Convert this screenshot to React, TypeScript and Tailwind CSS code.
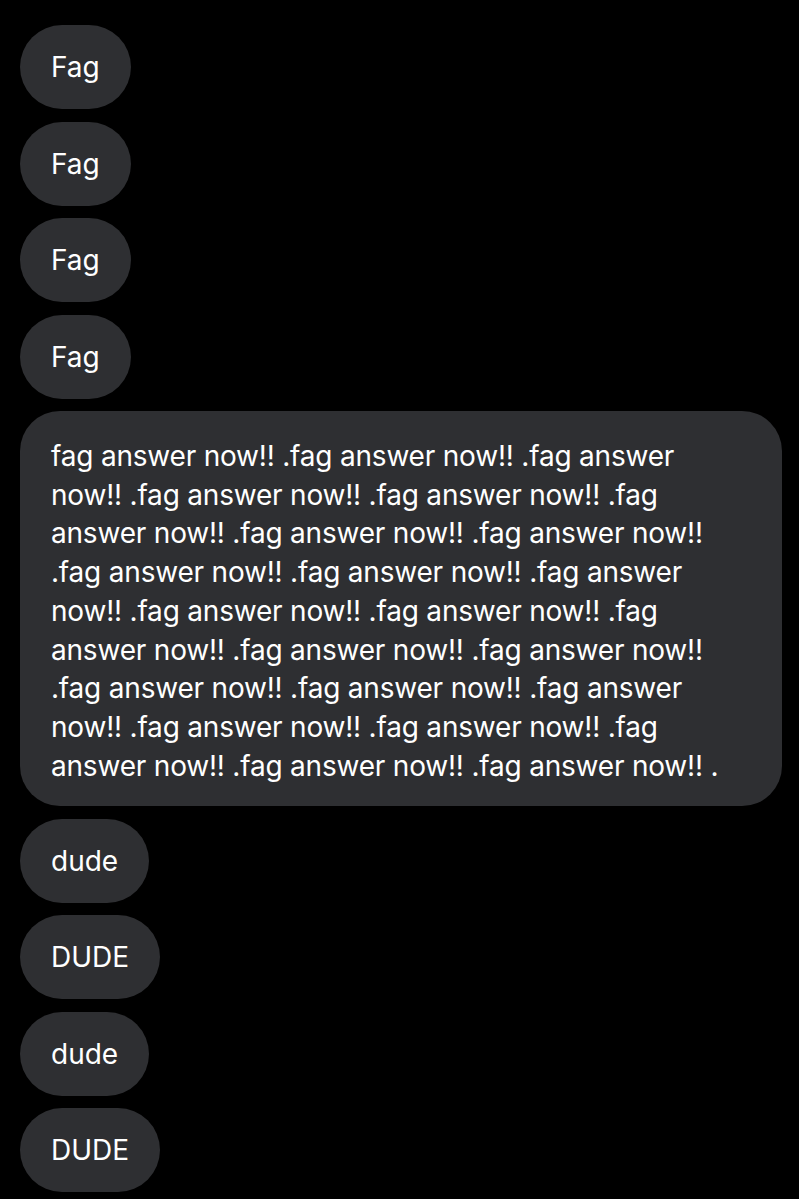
const short = ["Fag", "Fag", "Fag", "Fag"]
const after = ["dude", "DUDE", "dude", "DUDE"]

const long = Array.from({ length: 24 }, (_, i) => (i === 0 ? "fag answer now!!" : ".fag answer now!!")).join(" ") + " ."

function Bubble({ text }: { text: string }) {
  return (
    <div className="self-start rounded-full bg-[#2e2f32] px-[31px] py-[22px] text-[28px] leading-[40px] text-white">
      {text}
    </div>
  )
}

export default function App() {
  return (
    <div
      className="min-h-[1199px] w-[799px] bg-black px-[20px] pt-[25px]"
      style={{ fontFamily: 'Inter, "Liberation Sans", Arial, sans-serif' }}
    >
      <div className="flex flex-col gap-[12.5px]">
        {short.map((t, i) => (
          <Bubble key={"s" + i} text={t} />
        ))}
        <div className="w-[762px] rounded-[40px] bg-[#2e2f32] px-[31px] pt-[26px] pb-[21px] text-[28px] leading-[38.7px] tracking-[-0.2px] text-white">
          {long}
        </div>
        {after.map((t, i) => (
          <Bubble key={"a" + i} text={t} />
        ))}
      </div>
    </div>
  )
}
